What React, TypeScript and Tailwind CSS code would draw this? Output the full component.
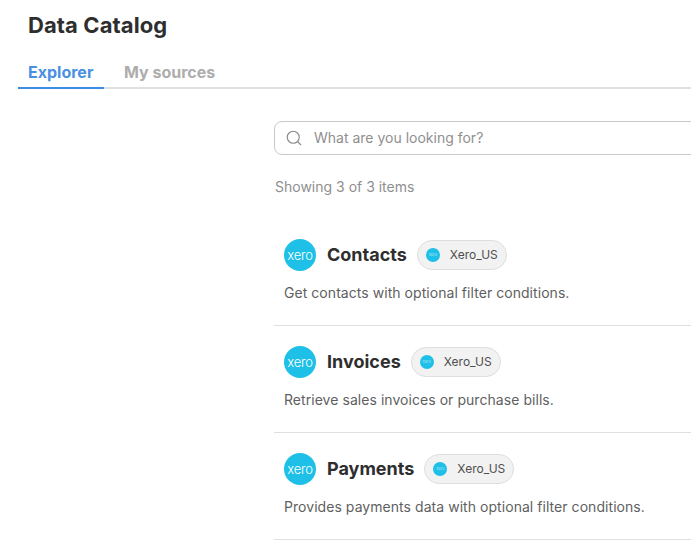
import React from 'react';
import { Search } from 'lucide-react';

interface CatalogItemProps {
  name: string;
  description: string;
}

const XeroLogo: React.FC<{ small?: boolean }> = ({ small }) => (
  <div
    className={
      small
        ? 'w-[14px] h-[14px] rounded-full bg-[#1ec0e8] flex items-center justify-center text-white/60 text-[4px] leading-none shrink-0'
        : 'w-8 h-8 rounded-full bg-[#1ec0e8] flex items-center justify-center text-white text-[13px] font-light tracking-[-0.2px] leading-none shrink-0'
    }
  >
    xero
  </div>
);

const CatalogItem: React.FC<CatalogItemProps> = ({ name, description }) => (
  <div className="h-[107px] border-b border-[#dfdfdf] pt-[20px] pl-[10px]">
    <div className="flex items-center h-8">
      <XeroLogo />
      <h3 className="ml-[11px] text-lg font-bold text-[#2e2e2e] leading-none">{name}</h3>
      <div className="ml-[10px] flex items-center h-[30px] pl-[8px] pr-[8px] rounded-full bg-[#f2f2f2] border border-[#dedede]">
        <XeroLogo small />
        <span className="ml-[10px] text-xs text-[#4f4f4f]">Xero_US</span>
      </div>
    </div>
    <p className="mt-[12px] text-sm tracking-[0.05px] leading-5 text-[#5f5f5f]">{description}</p>
  </div>
);

export default function App() {
  const items = [
    { name: 'Contacts', description: 'Get contacts with optional filter conditions.' },
    { name: 'Invoices', description: 'Retrieve sales invoices or purchase bills.' },
    { name: 'Payments', description: 'Provides payments data with optional filter conditions.' },
  ];

  return (
    <div className="w-[691px] h-[553px] overflow-hidden bg-white font-['Inter',sans-serif]">
      <div className="pl-[18px]">
        <h1 className="pl-[10px] pt-[10px] text-[22px] tracking-[0.1px] leading-[30px] font-bold text-[#2e2e2e]">Data Catalog</h1>
        <div className="mt-[15px] flex border-b-2 border-[#dee0e3] h-[34px]">
          <div className="h-[34px] w-[86px] px-[10px] border-b-2 border-[#3b8ee0] text-base leading-[34px] font-bold text-[#4a90e2]">
            Explorer
          </div>
          <div className="ml-[20px] text-base leading-[34px] font-bold text-[#adadad]">My sources</div>
        </div>
      </div>
      <div className="pl-[274px] pt-[32px]">
        <div className="w-[500px] h-[34px] flex items-center pl-[10px] border border-[#c9c9c9] rounded-lg">
          <Search className="w-[18px] h-[18px] text-[#8a8a8a]" strokeWidth={1.5} />
          <span className="ml-[11px] text-sm text-[#8f8f8f]">What are you looking for?</span>
        </div>
        <p className="mt-[22px] pl-px text-sm leading-5 text-[#8f8f8f]">Showing 3 of 3 items</p>
        <div className="mt-[22px] w-[500px]">
          {items.map((item) => (
            <CatalogItem key={item.name} {...item} />
          ))}
        </div>
      </div>
    </div>
  );
}
